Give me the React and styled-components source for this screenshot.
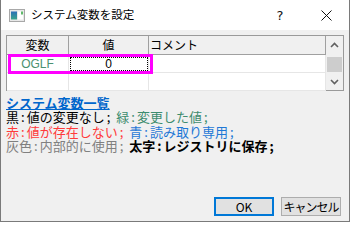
import styled, { createGlobalStyle } from "styled-components";

const GlobalStyle = createGlobalStyle`
  html, body {
    margin: 0;
    padding: 0;
    background: #ffffff;
  }
  * {
    box-sizing: border-box;
  }
`;

const uiFont = `"Noto Sans CJK JP", "Noto Sans", sans-serif`;

const Window = styled.div`
  width: 350px;
  height: 222px;
  display: flex;
  flex-direction: column;
  background: #f0f0f0;
  border: 1px solid #7a7a7a;
  border-top: none;
  font-family: ${uiFont};
  color: #000;
  overflow: hidden;
`;

const TitleBar = styled.div`
  height: 30px;
  flex: none;
  display: flex;
  align-items: center;
  background: #ffffff;
  padding-left: 8px;
`;

const TitleText = styled.span`
  font-size: 11.5px;
  margin-left: 6px;
  flex: 1;
  line-height: 1;
`;

const CaptionButton = styled.div`
  width: 46px;
  height: 30px;
  display: flex;
  align-items: center;
  justify-content: center;
  font-family: "DejaVu Sans", sans-serif;
  font-size: 13px;
  color: #111;
`;

const Body = styled.div`
  flex: 1;
  display: flex;
  flex-direction: column;
  padding: 5px 5px 5px 4px;
`;

const Grid = styled.div`
  width: 338px;
  height: 56px;
  margin-left: 1px;
  display: flex;
  background: #ffffff;
  border: 1px solid #9a9a9a;
`;

const Table = styled.div`
  flex: 1;
  display: flex;
  flex-direction: column;
  position: relative;
`;

const Row = styled.div`
  display: flex;
  height: ${(p) => (p.$header ? 19 : 18)}px;
  flex: none;
  background: ${(p) => (p.$header ? "#f0f0f0" : "#ffffff")};
  border-bottom: 1px solid ${(p) => (p.$header ? "#a0a0a0" : "#e6e6e6")};
  font-size: 12px;
`;

const Cell = styled.div`
  width: ${(p) => (p.$width ? `${p.$width}px` : "auto")};
  flex: ${(p) => (p.$width ? "none" : 1)};
  display: flex;
  align-items: center;
  justify-content: ${(p) => (p.$left ? "flex-start" : "center")};
  padding-left: ${(p) => (p.$left ? 1 : 0)}px;
  border-right: 1px solid ${(p) => (p.$header ? "#a0a0a0" : "#e6e6e6")};
  color: ${(p) => p.$color || "#000"};
  font-family: ${(p) => (p.$latin ? `"Liberation Sans", Arial, sans-serif` : uiFont)};
  line-height: 1;
`;

const FocusBox = styled.div`
  width: 78px;
  height: 14px;
  border: 1px dotted #000;
  display: flex;
  align-items: center;
  justify-content: center;
`;

const Highlight = styled.div`
  position: absolute;
  left: 1px;
  top: 18px;
  width: 145px;
  height: 20px;
  border: 3px solid #ff00ff;
  pointer-events: none;
`;

const ScrollBar = styled.div`
  width: 17px;
  flex: none;
  display: flex;
  flex-direction: column;
  background: #f0f0f0;
`;

const ScrollArrow = styled.div`
  height: 17px;
  display: flex;
  align-items: center;
  justify-content: center;
`;

const ScrollTrack = styled.div`
  flex: 1;
  padding: 4px 1px 0 1px;
`;

const Thumb = styled.div`
  height: 15px;
  background: #cdcdcd;
`;

const Legend = styled.div`
  margin-top: 4px;
  padding-left: 1px;
  font-size: 13px;
  line-height: 14.5px;
`;

const LegendTitle = styled.div`
  font-weight: bold;
  color: #0066cc;
  text-decoration: underline;
  line-height: 15px;
`;

const LegendLine = styled.div`
  white-space: nowrap;
`;

const Key = styled.span`
  color: ${(p) => p.$color};
  font-weight: ${(p) => (p.$bold ? "bold" : "normal")};
  margin-right: ${(p) => (p.$gap ? 4 : 0)}px;
`;

const Punct = styled.span`
  padding: 0 2px;
`;

const ButtonRow = styled.div`
  margin-top: auto;
  display: flex;
  justify-content: flex-end;
  gap: 7px;
  padding-right: 3px;
`;

const Button = styled.div`
  width: 60px;
  height: 19px;
  display: flex;
  align-items: center;
  justify-content: center;
  background: #e1e1e1;
  border: ${(p) => (p.$default ? "2px solid #0078d7" : "1px solid #adadad")};
  font-size: 12px;
  letter-spacing: ${(p) => (p.$tight ? "-1px" : "0")};
  white-space: nowrap;
  line-height: 1;
`;

const AppIcon = () => (
  <svg width="16" height="13" viewBox="0 0 16 13">
    <defs>
      <linearGradient id="ig" x1="0" y1="0" x2="0" y2="1">
        <stop offset="0" stopColor="#2b6fb8" />
        <stop offset="1" stopColor="#3aa58a" />
      </linearGradient>
    </defs>
    <rect x="0.5" y="0.5" width="15" height="12" fill="#e8e8e8" stroke="#a8a8a8" />
    <rect x="2" y="2.5" width="6" height="8" fill="url(#ig)" />
    <rect x="9" y="2.5" width="5" height="8" fill="#ffffff" />
    <rect x="12" y="2.5" width="2" height="3" fill="#5fb86a" />
  </svg>
);

const CloseGlyph = () => (
  <svg width="11" height="11" viewBox="0 0 11 11">
    <path d="M0.5 0.5 L10.5 10.5 M10.5 0.5 L0.5 10.5" stroke="#111" strokeWidth="1" />
  </svg>
);

const Chevron = ({ up }) => (
  <svg width="9" height="6" viewBox="0 0 9 6">
    <path
      d={up ? "M1 5 L4.5 1.5 L8 5" : "M1 1 L4.5 4.5 L8 1"}
      fill="none"
      stroke="#606060"
      strokeWidth="1.6"
    />
  </svg>
);

const App = () => {
  const legend = [
    [
      { key: "黒", desc: "値の変更なし", color: "#000000" },
      { key: "緑", desc: "変更した値", color: "#3d8c6e" },
    ],
    [
      { key: "赤", desc: "値が存在しない", color: "#ff3b3b" },
      { key: "青", desc: "読み取り専用", color: "#1f78d6" },
    ],
    [
      { key: "灰色", desc: "内部的に使用", color: "#808080" },
      { key: "太字", desc: "レジストリに保存", color: "#000000", bold: true },
    ],
  ];

  return (
    <>
      <GlobalStyle />
      <Window>
        <TitleBar>
          <AppIcon />
          <TitleText>システム変数を設定</TitleText>
          <CaptionButton>?</CaptionButton>
          <CaptionButton>
            <CloseGlyph />
          </CaptionButton>
        </TitleBar>
        <Body>
          <Grid>
            <Table>
              <Row $header>
                <Cell $header $width={62}>変数</Cell>
                <Cell $header $width={80}>値</Cell>
                <Cell $header $left>コメント</Cell>
              </Row>
              <Row>
                <Cell $width={62} $color="#4a9070" $latin>OGLF</Cell>
                <Cell $width={80} $latin>
                  <FocusBox>0</FocusBox>
                </Cell>
                <Cell />
              </Row>
              <Row>
                <Cell $width={62} />
                <Cell $width={80} />
                <Cell />
              </Row>
              <Highlight />
            </Table>
            <ScrollBar>
              <ScrollArrow>
                <Chevron up />
              </ScrollArrow>
              <ScrollTrack>
                <Thumb />
              </ScrollTrack>
              <ScrollArrow>
                <Chevron />
              </ScrollArrow>
            </ScrollBar>
          </Grid>
          <Legend>
            <LegendTitle>システム変数一覧</LegendTitle>
            {legend.map((line, index) => (
              <LegendLine key={index}>
                {line.map((item, i) => (
                  <Key key={i} $color={item.color} $bold={item.bold} $gap={i === 0}>
                    {item.key}
                    <Punct>:</Punct>
                    {item.desc}
                    <Punct>;</Punct>
                  </Key>
                ))}
              </LegendLine>
            ))}
          </Legend>
          <ButtonRow>
            <Button $default>OK</Button>
            <Button $tight>キャンセル</Button>
          </ButtonRow>
        </Body>
      </Window>
    </>
  );
};

export default App;
